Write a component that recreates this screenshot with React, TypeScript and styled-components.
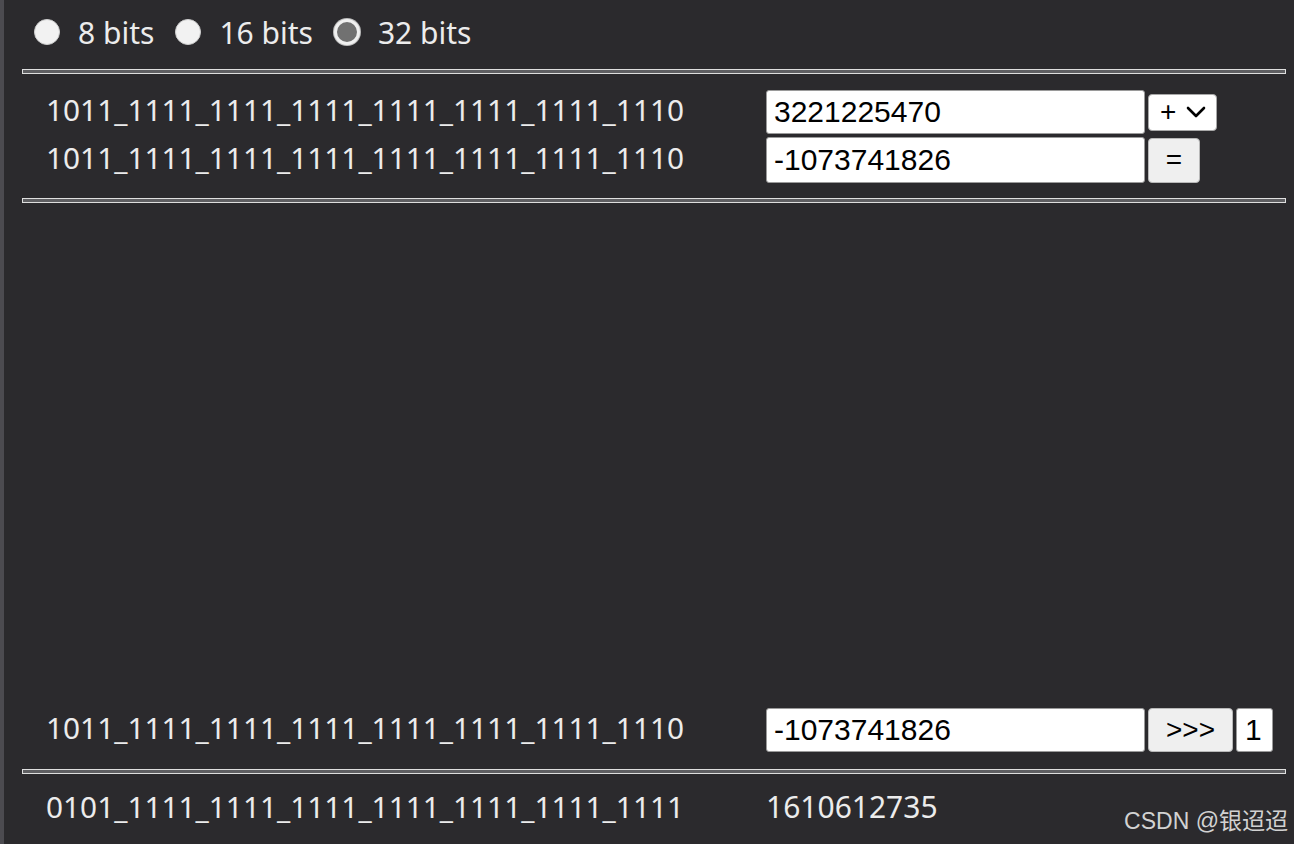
import React, { useState } from 'react';
import styled, { createGlobalStyle } from 'styled-components';

const GlobalStyle = createGlobalStyle`
  html, body {
    margin: 0;
    padding: 0;
    background: #2b2a2d;
  }
  body {
    color: #ececec;
    font-family: "Noto Sans", "Open Sans", sans-serif;
  }
`;

const Page = styled.div`
  position: relative;
  box-sizing: border-box;
  min-height: 844px;
  border-left: 4px solid #4c4b50;
  padding: 0 8px 0 18px;
`;

const RadioRow = styled.div`
  display: flex;
  align-items: center;
  height: 69px;
  padding-left: 12px;
  padding-bottom: 6px;
  box-sizing: border-box;
`;

const RadioLabel = styled.label`
  display: flex;
  align-items: center;
  margin-right: 21px;
  font-size: 30px;
  line-height: 1;
  cursor: pointer;
`;

const RadioText = styled.span`
  padding-top: 3px;
`;

const RadioInput = styled.input`
  appearance: none;
  box-sizing: border-box;
  width: 26px;
  height: 26px;
  margin: 0 18px 0 0;
  border-radius: 50%;
  background: #f2f2f2;
  border: 1px solid #cfcfcf;
  &:checked {
    background: #717171;
    border: 3px solid #f0f0f0;
    box-shadow: 0 0 0 1px #bdbdbd;
  }
`;

const Rule = styled.hr`
  margin: 0;
  box-sizing: border-box;
  height: 5px;
  border: 1px solid #dedede;
  background: #5f5f62;
`;

const Group = styled.div<{ $top: number; $bottom: number }>`
  display: flex;
  flex-direction: column;
  gap: 3px;
  padding: ${(p) => p.$top}px 0 ${(p) => p.$bottom}px;
`;

const Row = styled.div<{ $h?: number }>`
  display: flex;
  align-items: center;
  height: ${(p) => p.$h ?? 44}px;
  padding-left: 24px;
`;

const Binary = styled.span`
  width: 720px;
  flex: none;
  font-size: 29.8px;
  line-height: 1.2;
  padding-bottom: 4px;
  white-space: nowrap;
`;

const NumberInput = styled.input<{ $h?: number }>`
  box-sizing: border-box;
  width: 379px;
  height: ${(p) => p.$h ?? 44}px;
  margin: 0;
  padding: 0 7px;
  border: 1px solid #9a9a9a;
  border-radius: 3px;
  background: #fff;
  color: #000;
  font-family: "Liberation Sans", Arial, sans-serif;
  font-size: 30px;
  outline: none;
`;

const SmallInput = styled(NumberInput)`
  width: 37px;
  margin-left: 3px;
  padding: 0 8px;
`;

const OpSelect = styled.button`
  display: flex;
  align-items: center;
  gap: 10px;
  box-sizing: border-box;
  height: 37px;
  margin-left: 3px;
  padding: 0 10px 0 11px;
  border: 1px solid #a8a8a8;
  border-radius: 4px;
  background: #fff;
  color: #000;
  font-family: "Liberation Sans", Arial, sans-serif;
  font-size: 28px;
  line-height: 1;
`;

const GrayButton = styled.button<{ $w: number; $h?: number }>`
  box-sizing: border-box;
  width: ${(p) => p.$w}px;
  height: ${(p) => p.$h ?? 45}px;
  margin-left: 3px;
  padding: 0;
  border: 1px solid #b8b8b8;
  border-radius: 4px;
  background: #efefef;
  color: #000;
  font-family: "Liberation Sans", Arial, sans-serif;
  font-size: 28px;
`;

const Spacer = styled.div`
  height: 505px;
`;

const ResultRow = styled.div`
  display: flex;
  align-items: center;
  height: 70px;
  padding-left: 24px;
`;

const ResultNumber = styled.span`
  font-size: 30px;
  line-height: 1.2;
  padding-bottom: 4px;
`;

const Watermark = styled.div`
  position: absolute;
  right: 6px;
  bottom: 8px;
  color: #d2d2d2;
  font-family: "Liberation Sans", "Noto Sans CJK SC", sans-serif;
  font-size: 23px;
`;

const Chevron = () => (
  <svg width="20" height="14" viewBox="0 0 20 14" fill="none">
    <path d="M2 3 L10 11 L18 3" stroke="#000" strokeWidth="2.6" strokeLinecap="round" strokeLinejoin="round" />
  </svg>
);

const bin = '1011_1111_1111_1111_1111_1111_1111_1110';

export default function App() {
  const [bits, setBits] = useState('32');
  return (
    <Page>
      <GlobalStyle />
      <RadioRow>
        {['8', '16', '32'].map((b) => (
          <RadioLabel key={b}>
            <RadioInput type="radio" name="bits" checked={bits === b} onChange={() => setBits(b)} />
            <RadioText>{b} bits</RadioText>
          </RadioLabel>
        ))}
      </RadioRow>
      <Rule />
      <Group $top={16} $bottom={15}>
        <Row>
          <Binary>{bin}</Binary>
          <NumberInput defaultValue="3221225470" />
          <OpSelect>
            +
            <Chevron />
          </OpSelect>
        </Row>
        <Row $h={46}>
          <Binary>{bin}</Binary>
          <NumberInput defaultValue="-1073741826" $h={46} />
          <GrayButton $w={52}>=</GrayButton>
        </Row>
      </Group>
      <Rule />
      <Spacer />
      <Group $top={0} $bottom={17}>
        <Row>
          <Binary>{bin}</Binary>
          <NumberInput defaultValue="-1073741826" />
          <GrayButton $w={85} $h={44}>&gt;&gt;&gt;</GrayButton>
          <SmallInput defaultValue="1" />
        </Row>
      </Group>
      <Rule />
      <ResultRow>
        <Binary>0101_1111_1111_1111_1111_1111_1111_1111</Binary>
        <ResultNumber>1610612735</ResultNumber>
      </ResultRow>
      <Watermark>CSDN @银迢迢</Watermark>
    </Page>
  );
}
